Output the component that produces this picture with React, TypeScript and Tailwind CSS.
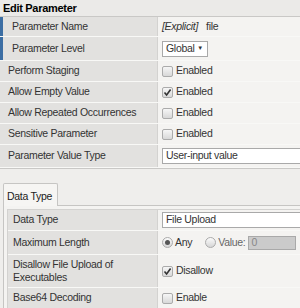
import React from 'react';

const font = { fontFamily: '"Liberation Sans", Arial, sans-serif' };

function Check({ checked }: { checked?: boolean }) {
  return (
    <span className="inline-flex h-[11px] w-[11px] shrink-0 items-center justify-center rounded-[2px] border border-[#ababab] bg-gradient-to-b from-[#f6f6f6] to-[#d8d8d8]">
      {checked && (
        <svg width="9" height="9" viewBox="0 0 9 9">
          <path d="M1.5 4.5 L3.6 7 L7.6 1.5" fill="none" stroke="#333" strokeWidth="1.6" />
        </svg>
      )}
    </span>
  );
}

function Radio({ checked }: { checked?: boolean }) {
  return (
    <span className="inline-flex h-[11px] w-[11px] shrink-0 items-center justify-center rounded-full border border-[#ababab] bg-gradient-to-b from-[#fbfbfb] to-[#d6d6d6]">
      {checked && <span className="h-[5px] w-[5px] rounded-full bg-[#555]" />}
    </span>
  );
}

function Row({
  label,
  children,
  bar,
  h = 'h-[21px]',
  labelPad = 'pl-2',
  labelW = 'w-[157px]',
}: {
  label: React.ReactNode;
  children: React.ReactNode;
  bar?: boolean;
  h?: string;
  labelPad?: string;
  labelW?: string;
}) {
  return (
    <div className={`flex ${h} border-b border-[#f8f8f6]`}>
      <div className={`flex ${labelW} shrink-0 items-center whitespace-nowrap bg-[#e2e1df] text-[#333] ${labelPad} ${bar ? 'border-l-[3px] border-[#3c6ea3] pl-[9px]' : ''}`}>
        {label}
      </div>
      <div className="flex min-w-0 flex-1 items-center gap-[3px] whitespace-nowrap border-l border-[#d3d2d0] bg-[#f4f3f1] pl-[4px] text-[#333]">{children}</div>
    </div>
  );
}

const inner = 'w-[149px]';

export default function App() {
  return (
    <div className="h-[308px] w-[300px] overflow-hidden bg-[#efeeec] text-[10.5px] tracking-[-0.3px] text-[#222]" style={font}>
      <div className="h-[17px] border-b border-[#c9c8c6] bg-[#ebeae8] pl-[3px] text-[11px] font-bold leading-[16px] text-black">
        Edit Parameter
      </div>
      <div className="border-b border-[#c9c8c6]">
        <Row label="Parameter Name" bar h="h-[20px]">
          <span className="italic">[Explicit]</span>
          <span className="ml-[5px]">file</span>
        </Row>
        <Row label="Parameter Level" bar h="h-[24px]">
          <span className="flex h-[16px] w-[46px] shrink-0 items-center justify-between border border-[#a9a9a9] bg-white pl-[3px] pr-[4px]">
            <span>Global</span>
            <span className="text-[6px]">▼</span>
          </span>
        </Row>
        <Row label="Perform Staging">
          <Check />
          <span>Enabled</span>
        </Row>
        <Row label="Allow Empty Value">
          <Check checked />
          <span>Enabled</span>
        </Row>
        <Row label="Allow Repeated Occurrences">
          <Check />
          <span>Enabled</span>
        </Row>
        <Row label="Sensitive Parameter">
          <Check />
          <span>Enabled</span>
        </Row>
        <Row label="Parameter Value Type" h="h-[23px]">
          <span className="flex h-[16px] flex-1 items-center border border-r-0 border-[#a9a9a9] bg-white pl-[3px]">User-input value</span>
        </Row>
      </div>
      <div className="mt-[14px] flex">
        <div className="ml-[3px] h-[23px] whitespace-nowrap rounded-t-[2px] border border-b-0 border-[#c6c5c3] bg-[#f6f5f3] pl-[3px] pr-[5px] pt-[5px]">Data Type</div>
        <div className="flex-1 border-b border-[#c6c5c3]" />
      </div>
      <div className="ml-[3px] border-l border-[#c6c5c3] bg-[#f4f3f1] pl-[3px] pt-[3px]">
        <div className="border-l border-t border-[#d3d2d0]">
          <Row label="Data Type" labelPad="pl-[5px]" labelW={inner}>
            <span className="flex h-[16px] flex-1 items-center border border-r-0 border-[#a9a9a9] bg-white pl-[3px]">File Upload</span>
          </Row>
          <Row label="Maximum Length" labelPad="pl-[5px]" labelW={inner} h="h-[24px]">
            <span className="flex items-center gap-[2px]">
              <Radio checked />
              <span>Any</span>
            </span>
            <span className="ml-[10px] flex items-center gap-[2px] text-[#666]">
              <Radio />
              <span>Value:</span>
            </span>
            <span className="flex h-[14px] w-[48px] shrink-0 items-center border border-[#a9a9a9] bg-[#cbcbcb] pl-[2px] text-[#888]">0</span>
          </Row>
          <Row label={<span className="leading-[13px]">Disallow File Upload of<br />Executables</span>} labelPad="pl-[5px]" labelW={inner} h="h-[33px]">
            <Check checked />
            <span>Disallow</span>
          </Row>
          <Row label="Base64 Decoding" labelPad="pl-[5px]" labelW={inner}>
            <Check />
            <span>Enable</span>
          </Row>
        </div>
      </div>
    </div>
  );
}
